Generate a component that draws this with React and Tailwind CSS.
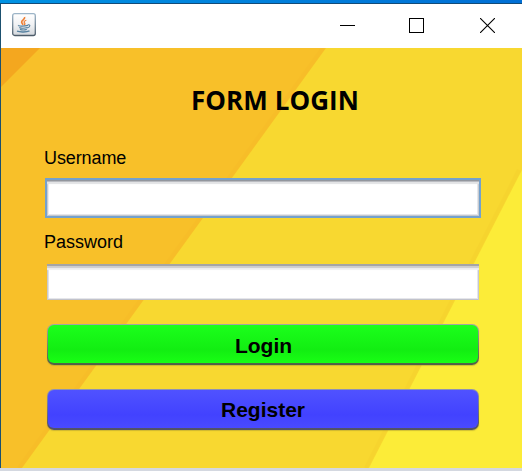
import React from "react";

function JavaIcon() {
  return (
    <svg width="24" height="24" viewBox="0 0 24 24" fill="none">
      <defs>
        <linearGradient id="tile" x1="0" y1="0" x2="0" y2="1">
          <stop offset="0" stopColor="#ffffff" />
          <stop offset="0.5" stopColor="#f1f2f4" />
          <stop offset="1" stopColor="#d3d7dc" />
        </linearGradient>
        <linearGradient id="edge" x1="0" y1="0" x2="0" y2="1">
          <stop offset="0" stopColor="#9db5c8" />
          <stop offset="1" stopColor="#4d5c69" />
        </linearGradient>
      </defs>
      <rect x="0.7" y="0.7" width="22.6" height="21.8" rx="2" fill="url(#tile)" stroke="url(#edge)" strokeWidth="1.3" />
      <path d="M12.600 4c.9 2.200-3.200 3.200-3 5.200.1 1 1 1.600 1.600 2.500" stroke="#ee7f35" strokeWidth="1.6" />
      <path d="M14.300 7.300c-2.200.7-2.800 1.600-1.700 2.700.6.7.3 1.400-.5 2" stroke="#ee7f35" strokeWidth="1.200" />
      <path d="M6.500 12.200c-.8 1 5 1.200 9.500.2M7.300 14.400c1.500.9 5.500.9 8.200.1M8 16.400c1.800.7 4.700.7 6.800 0" stroke="#55809f" strokeWidth="1.200" />
      <path d="M15.800 11.900c2.700-.8 3 2-.6 3.100" stroke="#55809f" strokeWidth="1.100" />
      <path d="M5 18.200c3.500 1.200 9.500 1 12.500-.4" stroke="#55809f" strokeWidth="1.400" />
    </svg>
  );
}

function TitleBar() {
  return (
    <div className="flex h-11 items-start bg-white">
      <div className="ml-[11px] mt-[9px]">
        <JavaIcon />
      </div>
      <div className="ml-auto mr-[27px] mt-[14px] flex">
        <svg width="15" height="15" shapeRendering="crispEdges">
          <rect y="7" width="15" height="1" />
        </svg>
        <svg className="ml-[54px]" width="15" height="15" fill="none" stroke="#000">
          <rect x="0.5" y="0.5" width="14" height="14" />
        </svg>
        <svg className="ml-[56px]" width="15" height="15" fill="none" stroke="#000" strokeWidth="1.1">
          <path d="M0 0L15 15M15 0L0 15" />
        </svg>
      </div>
    </div>
  );
}

function Backdrop() {
  return (
    <svg className="col-start-1 row-start-1" width="521" height="420" viewBox="1 48 521 420">
      <rect x="1" y="48" width="521" height="420" fill="#f8c029" />
      <path d="M1 48H40L1 87Z" fill="#f4a71f" />
      <path d="M326 48H522V468H22Z" fill="#f8d830" />
      <path d="M522 170V468H369Z" fill="#fcec38" />
      <path d="M323 48L19 468" stroke="#f6b928" strokeWidth="4" opacity="0.3" />
      <path d="M519 170L366 468" stroke="#f5d02d" strokeWidth="4" opacity="0.4" />
    </svg>
  );
}

export default function App() {
  return (
    <div className="h-[471px] w-[522px] overflow-hidden font-['Liberation_Sans',Arial,sans-serif] text-black">
      <div className="h-[3px] bg-linear-to-r from-[#0092e3] to-[#006fd5]" />
      <div className="h-px bg-[#124b78]" />
      <div className="border-l border-[#1b506f]">
        <TitleBar />
        <div className="grid h-[420px] grid-cols-1 grid-rows-1">
          <Backdrop />
          <form className="z-10 col-start-1 row-start-1 flex flex-col pl-[43px] pr-[41px] pt-[34px]" onSubmit={(e) => e.preventDefault()}>
            <h1 className="ml-[147px] whitespace-nowrap font-['Open_Sans',sans-serif] text-[26px] font-bold leading-9 tracking-[0.05px]">
              FORM LOGIN
            </h1>
            <label htmlFor="user" className="mt-[29px] text-lg leading-[22px] tracking-[-0.1px]">Username</label>
            <input
              id="user"
              className="ml-px mt-[9px] h-10 w-[436px] border-2 border-[#74a1cd] bg-white px-2 shadow-[inset_0_1px_0_#92969d,inset_0_2px_0_#b9bbc0,inset_0_4px_1px_#e2e3e5,inset_1px_0_0_#c5c8ce,inset_-1px_-1px_0_#c5c8ce,inset_2px_0_0_#ececee,inset_-2px_-2px_0_#e5e6ea] outline-none"
            />
            <label htmlFor="pass" className="mt-[13px] text-lg leading-[22px]">Password</label>
            <input
              id="pass"
              type="password"
              className="ml-[3px] mt-[11px] h-9 w-[432px] bg-white px-2 shadow-[inset_0_2px_0_#a5a5a6,inset_0_4px_1px_#cdcdcf,inset_0_6px_1px_#f0f0f1,inset_1px_0_0_#c5c5c9,inset_-1px_-1px_0_#c1c2cb,inset_2px_0_0_#e1e2e5,inset_-2px_-2px_0_#e5e6ea] outline-none"
            />
            <button className="ml-[3px] mt-6 h-[41px] w-[432px] rounded-[7px] bg-linear-to-b from-[#a2a8a0] to-[#4f6045] p-px pb-0.5 text-[21px] font-bold shadow-[0_1px_1px_#a9973388]">
              <span className="flex h-full items-center justify-center rounded-md bg-linear-to-b from-[#1bff1b] via-[#12ee12] via-65% to-[#18ff14] pl-px pt-1">Login</span>
            </button>
            <button className="ml-[3px] mt-6 h-[41px] w-[432px] rounded-[7px] bg-linear-to-b from-[#8f93b4] to-[#505065] p-px pb-0.5 text-[21px] font-bold shadow-[0_1px_1px_#a9973388]">
              <span className="flex h-full items-center justify-center rounded-md bg-linear-to-b from-[#5052ff] via-[#4242ff] via-65% to-[#494aff] pt-0.5">Register</span>
            </button>
          </form>
        </div>
      </div>
      <div className="h-[3px] bg-[#d4d8e0]" />
    </div>
  );
}
